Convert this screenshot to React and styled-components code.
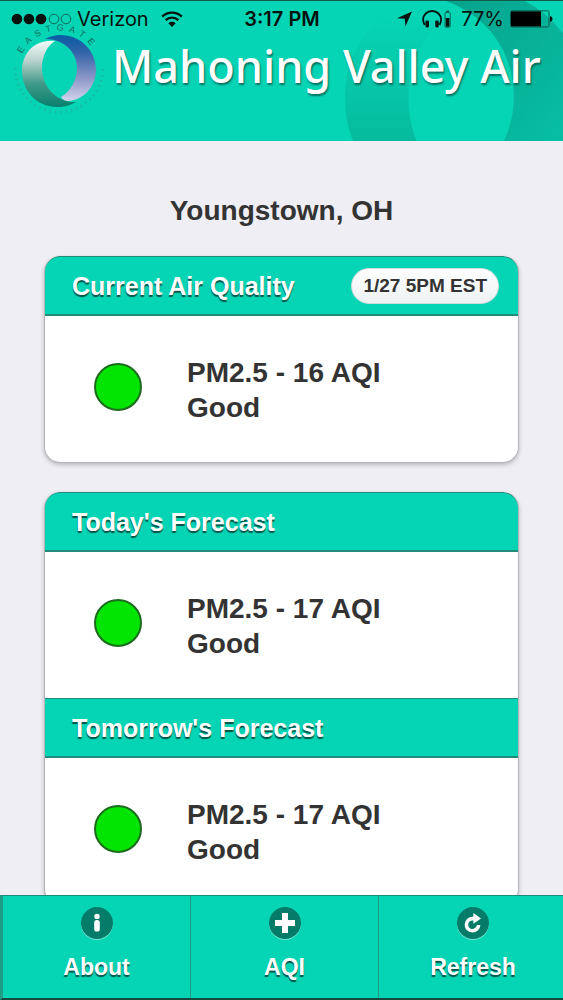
import React from 'react';
import styled, { createGlobalStyle } from 'styled-components';

const forecasts = [
  { title: "Today's Forecast", reading: 'PM2.5 - 17 AQI', level: 'Good' },
  { title: "Tomorrow's Forecast", reading: 'PM2.5 - 17 AQI', level: 'Good' },
];

// Icons
function InfoIcon() {
  return (
    <svg width="18" height="20" viewBox="0 0 18 20" fill="#fff" aria-hidden="true">
      <circle cx="9" cy="3.4" r="2.7" />
      <rect x="6.2" y="7" width="5.6" height="11.6" rx="2.6" />
    </svg>
  );
}

function PlusIcon() {
  return (
    <svg width="20" height="20" viewBox="0 0 20 20" fill="none" stroke="#fff" strokeWidth="6" aria-hidden="true">
      <path d="M10 0V20M0 10H20" />
    </svg>
  );
}

function RefreshIcon() {
  return (
    <svg width="20" height="20" viewBox="0 0 20 20" fill="none" aria-hidden="true">
      <path d="M11.6 5.6H9.6A6.1 6.1 0 1 0 15.6 12" stroke="#fff" strokeWidth="3.6" />
      <path d="M10.4 0L18 5.6L10.4 10.8Z" fill="#fff" />
    </svg>
  );
}

function Signal() {
  return (
    <svg width="62" height="12" viewBox="0 0 62 12" aria-hidden="true">
      {[6, 18, 30].map((x) => <circle key={x} cx={x} cy="6" r="5.3" fill="#06120f" />)}
      {[43, 55].map((x) => (
        <circle key={x} cx={x} cy="6" r="4.8" fill="none" stroke="#0d5f50" strokeWidth="0.9" />
      ))}
    </svg>
  );
}

function Wifi() {
  return (
    <svg width="22" height="16" viewBox="0 0 22 16" fill="none" stroke="#06120f" strokeWidth="2.4" aria-hidden="true">
      <path d="M1.2 5.6A14 14 0 0 1 20.8 5.6" />
      <path d="M4.6 9.2A9.2 9.2 0 0 1 17.4 9.2" />
      <path d="M7.4 12.2A5.2 5.2 0 0 1 14.6 12.2L11 15.9Z" fill="#06120f" stroke="none" />
    </svg>
  );
}

function Location() {
  return (
    <svg width="15" height="16" viewBox="0 0 15 16" fill="#06120f" aria-hidden="true">
      <path d="M15 0.5L8.4 15.5L7.8 7.8L0 7.2Z" />
    </svg>
  );
}

function Headphones() {
  return (
    <svg width="29" height="18" viewBox="0 0 29 18" fill="none" aria-hidden="true">
      <path d="M2.6 15C1.4 12.6 1.1 11 1.1 9.6A9 8.6 0 0 1 19.1 9.6C19.1 11 18.8 12.6 17.6 15" stroke="#06120f" strokeWidth="1.8" />
      <rect x="3.4" y="10.6" width="3.6" height="6.8" rx="1.4" fill="#06120f" />
      <rect x="13.2" y="10.6" width="3.6" height="6.8" rx="1.4" fill="#06120f" />
      <rect x="23" y="2.4" width="5.2" height="14.8" rx="0.8" stroke="#0b5a4c" strokeWidth="0.9" />
      <rect x="24.2" y="0.6" width="2.8" height="1.8" fill="#0b5a4c" />
      <rect x="23.8" y="8" width="3.6" height="8.6" fill="#06120f" />
    </svg>
  );
}

function Battery() {
  return (
    <svg width="43" height="18" viewBox="0 0 43 18" aria-hidden="true">
      <rect x="0.6" y="0.8" width="38.4" height="16.2" rx="1.6" fill="none" stroke="#0b5a4c" />
      <rect x="1" y="1.4" width="30" height="15" fill="#000" />
      <path d="M40 6C43.4 7 43.4 11 40 12Z" fill="#06120f" />
    </svg>
  );
}

function EastgateLogo() {
  return (
    <Logo viewBox="8 16 100 104" role="img" aria-label="Eastgate">
      <defs>
        <linearGradient id="silver" x1="0" y1="0" x2="0" y2="1">
          <stop offset="0" stopColor="#f2fbfa" />
          <stop offset="0.3" stopColor="#b9d2cd" />
          <stop offset="0.65" stopColor="#3f9a89" />
          <stop offset="1" stopColor="#087f6c" />
        </linearGradient>
        <linearGradient id="blue" x1="0" y1="0" x2="0" y2="1">
          <stop offset="0" stopColor="#0a5da3" />
          <stop offset="0.25" stopColor="#2f62a8" />
          <stop offset="0.65" stopColor="#8b96c6" />
          <stop offset="1" stopColor="#d3d4ee" />
        </linearGradient>
        <path id="topArc" d="M22 54A41 41 0 0 1 100 72" />
      </defs>
      <path
        d="M55 41C34 39 22 54 22 71C22 92 38 107 57 107C65 107 71 105 76 102C58 103 42 88 42 68C42 56 47 46 55 41Z"
        fill="url(#silver)"
      />
      <path
        d="M45 39C51 36 56 35 60 35C81 35 96 51 96 70C96 86 84 100 68 101C65 101 62 99 61 97C70 92 77 80 77 68C77 52 64 39 45 39Z"
        fill="url(#blue)"
      />
      <path
        d="M15 68A44 44 0 0 0 103 68"
        fill="none" stroke="#2b9f8c" strokeWidth="3" strokeDasharray="1.4 4" strokeOpacity="0.5"
      />
      <text fill="#176a60" fontFamily="Liberation Sans, sans-serif" fontSize="9" letterSpacing="5">
        <textPath href="#topArc">EASTGATE</textPath>
      </text>
    </Logo>
  );
}

function Reading({ reading, level }) {
  return (
    <ReadingRow>
      <Dot />
      <ReadingText>
        {reading}
        <br />
        {level}
      </ReadingText>
    </ReadingRow>
  );
}

function App() {
  return (
    <Page>
      <GlobalStyle />
      <Header>
        <Rings viewBox="0 0 221 141" aria-hidden="true">
          <defs>
            <linearGradient id="ringLeft" x1="0" y1="0" x2="0" y2="1">
              <stop offset="0" stopColor="#05d5b5" />
              <stop offset="1" stopColor="#06ba9d" />
            </linearGradient>
            <linearGradient id="ringRight" x1="0" y1="0" x2="1" y2="1">
              <stop offset="0" stopColor="#08a28c" />
              <stop offset="1" stopColor="#06bfa3" />
            </linearGradient>
          </defs>
          <path d="M40 16C12 38 1 66 1 98C1 114 4 128 9 141H73C56 96 66 48 102 16Z" fill="url(#ringLeft)" />
          <path d="M103 0C150 18 171 56 171 97C171 114 167 128 161 141H221V33C208 17 196 7 182 0Z" fill="url(#ringRight)" />
        </Rings>
        <StatusBar>
          <StatusGroup>
            <Signal />
            <span>Verizon</span>
            <Wifi />
          </StatusGroup>
          <Clock>3:17 PM</Clock>
          <StatusGroup $end>
            <Location />
            <Headphones />
            <span>77%</span>
            <Battery />
          </StatusGroup>
        </StatusBar>
        <Brand>
          <EastgateLogo />
          <Title>Mahoning Valley Air</Title>
        </Brand>
      </Header>
      <Content>
        <City>Youngstown, OH</City>
        <Card>
          <CardHeader>
            <CardTitle>Current Air Quality</CardTitle>
            <Badge>1/27 5PM EST</Badge>
          </CardHeader>
          <Reading reading="PM2.5 - 16 AQI" level="Good" />
        </Card>
        <Card>
          {forecasts.map((item) => (
            <React.Fragment key={item.title}>
              <CardHeader>
                <CardTitle>{item.title}</CardTitle>
              </CardHeader>
              <Reading reading={item.reading} level={item.level} />
            </React.Fragment>
          ))}
        </Card>
      </Content>
      <NavBar>
        <NavButton type="button">
          <IconDisc><InfoIcon /></IconDisc>
          About
        </NavButton>
        <NavButton type="button">
          <IconDisc><PlusIcon /></IconDisc>
          AQI
        </NavButton>
        <NavButton type="button">
          <IconDisc><RefreshIcon /></IconDisc>
          Refresh
        </NavButton>
      </NavBar>
    </Page>
  );
}

export default App;

const GlobalStyle = createGlobalStyle`
  * {
    box-sizing: border-box;
  }
  body {
    margin: 0;
    background: #eeeef4;
    color: #333;
    font-family: "Liberation Sans", Arial, sans-serif;
  }
`
const Page = styled.div`
  display: flex;
  flex-direction: column;
  height: 100vh;
  overflow: hidden;
`
const Header = styled.header`
  position: relative;
  flex: none;
  overflow: hidden;
  padding: 15px 12px 21px 8px;
  background: #05d5b5;
  border-top: 1px solid #12574b;
`
const Rings = styled.svg`
  position: absolute;
  right: 0;
  top: 0;
  height: 100%;
`
const StatusBar = styled.div`
  position: absolute;
  top: 0;
  left: 0;
  right: 0;
  display: grid;
  grid-template-columns: 1fr auto 1fr;
  align-items: center;
  padding: 6px 10px 0 11px;
  color: #06120f;
  font-family: Inter, sans-serif;
  font-size: 20px;
  line-height: 24px;
`
const StatusGroup = styled.div`
  display: flex;
  align-items: center;
  justify-content: ${(props) => (props.$end ? 'flex-end' : 'flex-start')};
  gap: ${(props) => (props.$end ? '10px' : '4px')};

  svg:last-child {
    margin-left: ${(props) => (props.$end ? '-4px' : '8px')};
  }
`
const Clock = styled.div`
  font-weight: 600;
`
const Brand = styled.div`
  position: relative;
  display: flex;
  align-items: center;
  gap: 4px;
`
const Logo = styled.svg`
  flex: none;
  width: 100px;
  height: 104px;
`
const Title = styled.h1`
  margin: 0 0 4px;
  color: #fff;
  font-family: "Noto Sans", sans-serif;
  font-size: 45px;
  font-weight: 500;
  line-height: 60px;
  white-space: nowrap;
  text-shadow: 1px 2px 2px rgba(0, 70, 60, 0.7);
`
const Content = styled.main`
  flex: 1;
  min-height: 0;
  overflow-y: auto;
  scrollbar-width: none;
  padding: 50px 44px 30px;
`
const City = styled.h2`
  margin: 0 0 25px;
  font-size: 28px;
  line-height: 40px;
  text-align: center;
`
const Card = styled.section`
  margin-bottom: 29px;
  overflow: hidden;
  background: #fff;
  border: 1px solid #b4b4b8;
  border-top: none;
  border-radius: 16px;
  box-shadow: 0 2px 4px rgba(0, 0, 0, 0.22);
`
const CardHeader = styled.div`
  display: flex;
  align-items: center;
  justify-content: space-between;
  height: 60px;
  margin: 0 -1px;
  padding: 0 19px 0 27px;
  background: #05d5b5;
  border: 1px solid #1f8b78;
  border-bottom-width: 2px;

  &:first-child {
    border-radius: 16px 16px 0 0;
  }
`
const CardTitle = styled.h3`
  margin: 0;
  color: #fff;
  font-size: 25px;
  line-height: 30px;
  text-shadow: 0 2px 1px rgba(0, 50, 42, 0.8);
`
const Badge = styled.span`
  padding: 0 11px;
  background: linear-gradient(#fff, #eef2f3);
  border: 1px solid #d2dcdc;
  border-radius: 18px;
  font-size: 19px;
  font-weight: 700;
  line-height: 34px;
`
const ReadingRow = styled.div`
  display: flex;
  align-items: flex-start;
  gap: 45px;
  padding: 39px 49px 37px;
`
const Dot = styled.span`
  flex: none;
  width: 48px;
  height: 48px;
  margin-top: 8px;
  background: #02e402;
  border: 2px solid #1d6b1d;
  border-radius: 50%;
`
const ReadingText = styled.p`
  margin: 0;
  font-size: 28px;
  font-weight: 700;
  line-height: 35px;
`
const NavBar = styled.nav`
  display: grid;
  grid-template-columns: repeat(3, 1fr);
  flex: none;
  margin-right: -4px;
  border-top: 1px solid #1f8b78;
  border-bottom: 2px solid #15483f;
  border-left: 3px solid #1f9c86;
  background: #05d5b5;
`
const NavButton = styled.button`
  display: flex;
  flex-direction: column;
  align-items: center;
  gap: 13px;
  padding: 11px 0 16px;
  background: none;
  border: none;
  border-right: 1px solid #1f9c86;
  color: #fff;
  font-family: inherit;
  font-size: 23px;
  font-weight: 700;
  line-height: 30px;
  text-shadow: 0 2px 1px rgba(0, 50, 42, 0.8);

  &:last-child {
    border-right: none;
  }
`
const IconDisc = styled.span`
  display: flex;
  align-items: center;
  justify-content: center;
  width: 32px;
  height: 32px;
  background: #047c69;
  border-radius: 50%;
  box-shadow: 0 1px 0 rgba(255, 255, 255, 0.45);
`
